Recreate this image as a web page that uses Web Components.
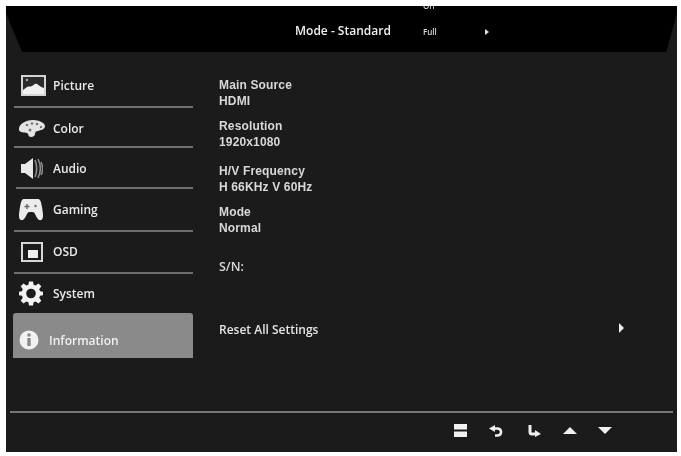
<!DOCTYPE html>
<html>
<head>
<meta charset="utf-8">
<title>OSD</title>
<style>
  html, body { margin: 0; height: 100%; background: #fff; overflow: hidden; }
  body { padding: 6px 4px 4px 6px; box-sizing: border-box; height: 456px; display: flex; }
</style>
</head>
<body>
<osd-screen>
  <osd-header slot="header"></osd-header>
  <osd-sidebar slot="side">
    <osd-item label="Picture" icon="picture" style="--h:42px;--row:39px"></osd-item>
    <osd-item label="Color" icon="color" style="--h:40px;--row:40px"></osd-item>
    <osd-item label="Audio" icon="audio" line="16" style="--h:41px;--row:41px"></osd-item>
    <osd-item label="Gaming" icon="gaming" style="--h:43px;--row:41px"></osd-item>
    <osd-item label="OSD" icon="osd" style="--h:42px;--row:39px"></osd-item>
    <osd-item label="System" icon="system" line="none" style="--h:39px;--row:39px"></osd-item>
    <osd-item label="Information" icon="info" active line="none"></osd-item>
  </osd-sidebar>
  <osd-info slot="main"></osd-info>
  <osd-footer slot="footer"></osd-footer>
</osd-screen>

<script>
const ICONS = {
  picture: '<svg style="margin-left:8px" width="25" height="21" viewBox="0 0 25 21"><rect x="1" y="1" width="23" height="19" fill="#2b2b2b" stroke="#d4d4d4" stroke-width="2"/><path d="M2 15 6 12c2-1 3 0 5-1s3-3 5-2 3 3 7 4v6H2z" fill="#f0f0f0"/><circle cx="6" cy="5" r="1.200" fill="#aaa"/></svg>',
  color: '<svg style="margin-left:6px" width="26" height="19" viewBox="0 0 26 19"><path d="M0 9C1 4 8 1 14 1s12 3 12 6c0 4-5 4-7 5-2 0-3 1-3 3s-2 3-4 3c-3 0-2-3-4-4-3-1-9 0-8-5z" fill="#e4e4e4"/><g fill="#777"><circle cx="8" cy="6" r="1.300"/><circle cx="13" cy="4.500" r="1.300"/><circle cx="18" cy="5" r="1.300"/><circle cx="22" cy="8" r="1.200"/><circle cx="11" cy="11" r="1.500"/></g></svg>',
  audio: '<svg style="margin-left:8px" width="22" height="23" viewBox="0 0 22 23"><path d="M0 7h4l8-6v21l-8-6H0z" fill="#e8e8e8"/><g fill="none" stroke="#8c8c8c" stroke-width="1.600"><path d="M14 3c2 5 2 12 0 17"/><path d="M17 2c3 6 3 13 0 19"/><path d="M20 5c2 4 2 9 0 13"/></g></svg>',
  gaming: '<svg style="margin-left:6px" width="24" height="23" viewBox="0 0 24 23"><path d="M5 1h14c2 0 3 2 4 8s2 12-1 13-5-4-6-6-2-2-4-2-3 0-4 2-3 7-6 6S0 15 1 9 3 1 5 1z" fill="#ececec"/><path d="M8 6v5M5.500 8.500h5" stroke="#666" stroke-width="1.400"/><circle cx="16.500" cy="8" r="1.300" fill="#777"/></svg>',
  osd: '<svg style="margin-left:8px" width="22" height="20" viewBox="0 0 22 20"><rect x="1" y="1" width="20" height="18" fill="none" stroke="#d6d6d6" stroke-width="2"/><rect x="7" y="8" width="10" height="8" fill="#f0f0f0"/></svg>',
  system: '<svg style="margin-left:6px" width="24" height="25" viewBox="0 0 24 24"><path d="M10 0h4l.6 3.200 2 .9L19.500 2l2.800 2.800-2.100 2.900.9 2 2.900.6v3.400l-2.900.6-.9 2 2.100 2.900-2.800 2.800-2.900-2.100-2 .9L14 24h-4l-.6-3.200-2-.9L4.500 22l-2.800-2.800 2.100-2.900-.9-2L0 13.700v-3.400l2.900-.6.900-2-2.100-2.900L4.500 2l2.900 2.100 2-.9z" fill="#f2f2f2"/><circle cx="12" cy="12" r="4.800" fill="#1c1b1c"/></svg>',
  info: '<svg style="margin-left:6px" width="20" height="20" viewBox="0 0 20 20"><circle cx="10" cy="10" r="9.500" fill="#f2f2f2"/><circle cx="10" cy="5" r="1.800" fill="#8a8a8a"/><rect x="8.300" y="8" width="3.400" height="8" fill="#8a8a8a"/></svg>'
};

class OsdScreen extends HTMLElement {
  constructor() {
    super();
    this.attachShadow({ mode: 'open' }).innerHTML = `
      <style>
        :host { display: flex; flex-direction: column; flex: 1; background: #1c1b1c; color: #e8e8e8; overflow: hidden; }
        .mid { display: flex; flex: 1; min-height: 0; }
      </style>
      <slot name="header"></slot>
      <div class="mid">
        <slot name="side"></slot>
        <slot name="main"></slot>
      </div>
      <slot name="footer"></slot>`;
  }
}

class OsdHeader extends HTMLElement {
  constructor() {
    super();
    this.attachShadow({ mode: 'open' }).innerHTML = `
      <style>
        :host { display: block; height: 46px; background: #000; clip-path: polygon(0 0, 100% 0, 100% 16%, 98.400% 100%, 2.400% 100%, 0 16%); font-family: "Open Sans", sans-serif; position: relative; }
        .row { display: flex; align-items: center; height: 46px; padding: 5px 0 0 289px; box-sizing: border-box; filter: blur(.45px); }
        .title { font-size: 12px; font-weight: 600; color: #f0f0f0; width: 128px; white-space: nowrap; margin-bottom: 3px; }
        .val { font-size: 8px; font-weight: 600; color: #ddd; width: 62px; }
        .arrow { width: 0; height: 0; border-left: 4px solid #ddd; border-top: 3px solid transparent; border-bottom: 3px solid transparent; }
        .off { position: absolute; left: 417px; top: -6px; font-size: 8px; font-weight: 600; color: #ccc; filter: blur(.45px); }
      </style>
      <span class="off">Off</span>
      <div class="row"><span class="title">Mode - Standard</span><span class="val">Full</span><span class="arrow"></span></div>`;
  }
}

class OsdSidebar extends HTMLElement {
  constructor() {
    super();
    this.attachShadow({ mode: 'open' }).innerHTML = `
      <style>
        :host { display: flex; flex-direction: column; width: 187px; padding: 14px 0 0 7px; box-sizing: border-box; flex: none; }
      </style>
      <slot></slot>`;
  }
}

class OsdItem extends HTMLElement {
  constructor() {
    super();
    const icon = ICONS[this.getAttribute('icon')];
    this.attachShadow({ mode: 'open' }).innerHTML = `
      <style>
        :host { display: block; height: var(--h, 41px); font-family: "Open Sans", sans-serif; font-size: 12px; font-weight: 600; color: #e9e9e9; position: relative; }
        .row { display: flex; align-items: center; height: var(--row, 39px); }
        .ic { width: 40px; display: flex; flex: none; filter: blur(.6px); }
        .label { filter: blur(.45px); }
        svg { display: block; flex: none; }
        .line { position: absolute; right: 0; left: 1px; bottom: 0; height: 2px; background: #6e6e6e; }
        :host([line="16"]) .line { left: 3px; }
        :host([line="none"]) .line { display: none; }
        :host([active]) { height: 45px; background: #8a8a8a; border-radius: 3px 3px 0 0; color: #f0f0f0; }
        :host([active]) .row { height: 54px; }
        :host([active]) .ic { width: 36px; }
      </style>
      <div class="row"><span class="ic">${icon}</span><span class="label">${this.getAttribute('label')}</span></div>
      <div class="line"></div>`;
  }
}

class OsdField extends HTMLElement {
  constructor() {
    super();
    this.attachShadow({ mode: 'open' }).innerHTML = `
      <style>
        :host { display: block; font-family: "Liberation Sans", Arial, sans-serif; font-size: 12px; font-weight: 700; line-height: 15.500px; color: #d8d8d8; letter-spacing: .15px; filter: blur(.45px); }
      </style>
      <div><slot></slot></div>
      <div>${this.getAttribute('value') || ''}</div>`;
  }
}

class OsdInfo extends HTMLElement {
  constructor() {
    super();
    this.attachShadow({ mode: 'open' }).innerHTML = `
      <style>
        :host { display: flex; flex-direction: column; flex: 1; padding: 26px 0 0 26px; box-sizing: border-box; }
        .a { margin-bottom: 10px; }
        .b { margin-bottom: 14px; }
        .c { margin-bottom: 10px; }
        .d { margin-bottom: 22px; }
        .sn { height: 16px; font-family: "Open Sans", sans-serif; font-size: 12.500px; font-weight: 600; color: #d8d8d8; filter: blur(.45px); margin-bottom: 47px; }
        .reset { display: flex; align-items: center; justify-content: space-between; width: 405px; font-family: "Open Sans", sans-serif; font-size: 12px; font-weight: 600; color: #e4e4e4; filter: blur(.45px); }
        .arrow { width: 0; height: 0; border-left: 5px solid #eee; border-top: 5px solid transparent; border-bottom: 5px solid transparent; transform: translateY(-2px); }
      </style>
      <osd-field class="a" value="HDMI">Main Source</osd-field>
      <osd-field class="b" value="1920x1080">Resolution</osd-field>
      <osd-field class="c" value="H 66KHz V 60Hz">H/V Frequency</osd-field>
      <osd-field class="d" value="Normal">Mode</osd-field>
      <div class="sn">S/N:</div>
      <div class="reset"><span>Reset All Settings</span><span class="arrow"></span></div>`;
  }
}

class OsdFooter extends HTMLElement {
  constructor() {
    super();
    this.attachShadow({ mode: 'open' }).innerHTML = `
      <style>
        :host { display: block; height: 41px; }
        .line { height: 2px; margin: 0 4px 0 4px; background: #767676; }
        .icons { display: flex; align-items: center; height: 35px; padding-left: 448px; filter: blur(.6px); }
        svg { display: block; flex: none; }
      </style>
      <div class="line"></div>
      <div class="icons">
        <svg width="13" height="13" viewBox="0 0 13 13" style="margin-right:22px"><rect x="0" y="0" width="13" height="5.500" fill="#f2f2f2"/><rect x="0" y="7.500" width="13" height="5.500" fill="#f2f2f2"/></svg>
        <svg width="14" height="12" viewBox="0 0 14 12" style="margin-right:25px"><path d="M6 0 0 3.500 6 7z" fill="#eee"/><path d="M5 3.500h3c3 0 4 1.500 4 3.500s-1 3.500-4 3.500H6" fill="none" stroke="#eee" stroke-width="2.600"/></svg>
        <svg width="13" height="12" viewBox="0 0 13 12" style="margin-right:22px"><path d="M2 0v7c0 1 .5 2 2 2h5" fill="none" stroke="#eee" stroke-width="3"/><path d="M7 5l6 4-6 3z" fill="#eee"/></svg>
        <svg width="14" height="7" viewBox="0 0 14 7" style="margin-right:21px"><path d="M7 0 14 7H0z" fill="#f0f0f0"/></svg>
        <svg width="14" height="7" viewBox="0 0 14 7"><path d="M0 0h14L7 7z" fill="#f0f0f0"/></svg>
      </div>`;
  }
}

customElements.define('osd-screen', OsdScreen);
customElements.define('osd-header', OsdHeader);
customElements.define('osd-sidebar', OsdSidebar);
customElements.define('osd-item', OsdItem);
customElements.define('osd-field', OsdField);
customElements.define('osd-info', OsdInfo);
customElements.define('osd-footer', OsdFooter);
</script>
</body>
</html>
